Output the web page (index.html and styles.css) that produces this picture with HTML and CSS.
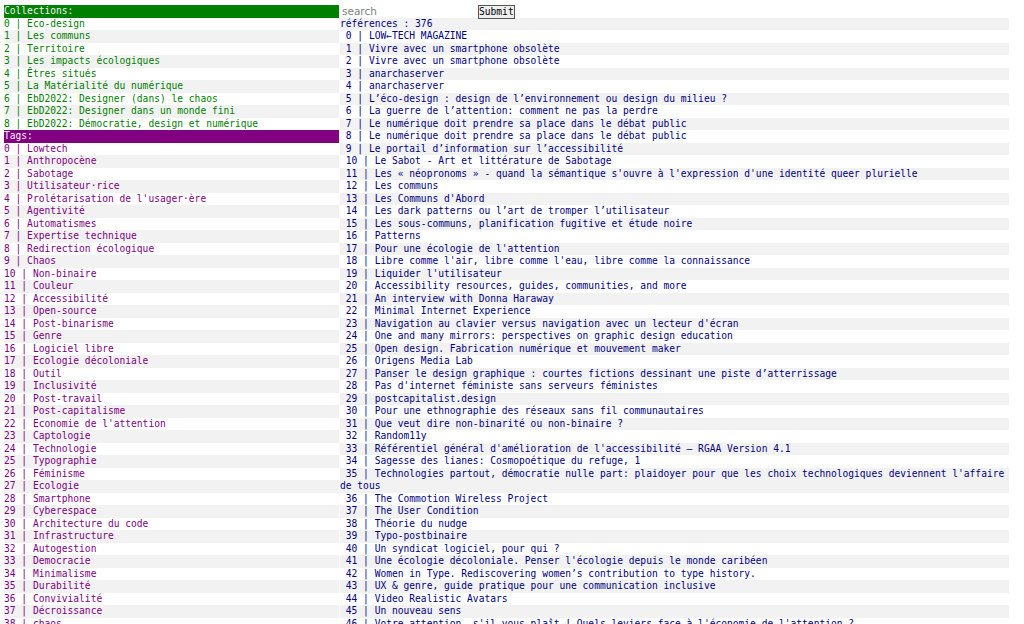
FILE: index.html
```html
<!DOCTYPE html>
<html lang="fr">
<head>
<meta charset="utf-8">
<title>Références</title>
<link rel="stylesheet" href="styles.css">
</head>
<body>
<div class="page">
  <div class="side">
    <section class="group collections">
      <div class="head">Collections:</div>
      <div class="row">0 | Eco-design</div>
      <div class="row">1 | Les communs</div>
      <div class="row">2 | Territoire</div>
      <div class="row">3 | Les impacts écologiques</div>
      <div class="row">4 | Êtres situés</div>
      <div class="row">5 | La Matérialité du numérique</div>
      <div class="row">6 | EbD2022: Designer (dans) le chaos</div>
      <div class="row">7 | EbD2022: Designer dans un monde fini</div>
      <div class="row">8 | EbD2022: Démocratie, design et numérique</div>
    </section>
    <section class="group tags">
      <div class="head">Tags:</div>
      <div class="row">0 | Lowtech</div>
      <div class="row">1 | Anthropocène</div>
      <div class="row">2 | Sabotage</div>
      <div class="row">3 | Utilisateur·rice</div>
      <div class="row">4 | Prolétarisation de l'usager·ère</div>
      <div class="row">5 | Agentivité</div>
      <div class="row">6 | Automatismes</div>
      <div class="row">7 | Expertise technique</div>
      <div class="row">8 | Redirection écologique</div>
      <div class="row">9 | Chaos</div>
      <div class="row">10 | Non-binaire</div>
      <div class="row">11 | Couleur</div>
      <div class="row">12 | Accessibilité</div>
      <div class="row">13 | Open-source</div>
      <div class="row">14 | Post-binarisme</div>
      <div class="row">15 | Genre</div>
      <div class="row">16 | Logiciel libre</div>
      <div class="row">17 | Ecologie décoloniale</div>
      <div class="row">18 | Outil</div>
      <div class="row">19 | Inclusivité</div>
      <div class="row">20 | Post-travail</div>
      <div class="row">21 | Post-capitalisme</div>
      <div class="row">22 | Economie de l'attention</div>
      <div class="row">23 | Captologie</div>
      <div class="row">24 | Technologie</div>
      <div class="row">25 | Typographie</div>
      <div class="row">26 | Féminisme</div>
      <div class="row">27 | Ecologie</div>
      <div class="row">28 | Smartphone</div>
      <div class="row">29 | Cyberespace</div>
      <div class="row">30 | Architecture du code</div>
      <div class="row">31 | Infrastructure</div>
      <div class="row">32 | Autogestion</div>
      <div class="row">33 | Democracie</div>
      <div class="row">34 | Minimalisme</div>
      <div class="row">35 | Durabilité</div>
      <div class="row">36 | Convivialité</div>
      <div class="row">37 | Décroissance</div>
      <div class="row">38 | chaos</div>
      <div class="row">39 | Design</div>
    </section>
  </div>
  <div class="main">
    <form class="search">
      <input class="search-input" type="text" placeholder="search">
      <button class="search-btn" type="button">Submit</button>
    </form>
    <div class="refs">
      <div class="ref">références : 376</div>
      <div class="ref"> 0 | LOW←TECH MAGAZINE</div>
      <div class="ref"> 1 | Vivre avec un smartphone obsolète</div>
      <div class="ref"> 2 | Vivre avec un smartphone obsolète</div>
      <div class="ref"> 3 | anarchaserver</div>
      <div class="ref"> 4 | anarchaserver</div>
      <div class="ref"> 5 | L’éco-design : design de l’environnement ou design du milieu ?</div>
      <div class="ref"> 6 | La guerre de l’attention: comment ne pas la perdre</div>
      <div class="ref"> 7 | Le numérique doit prendre sa place dans le débat public</div>
      <div class="ref"> 8 | Le numérique doit prendre sa place dans le débat public</div>
      <div class="ref"> 9 | Le portail d’information sur l’accessibilité</div>
      <div class="ref"> 10 | Le Sabot - Art et littérature de Sabotage</div>
      <div class="ref"> 11 | Les « néopronoms » - quand la sémantique s'ouvre à l'expression d'une identité queer plurielle</div>
      <div class="ref"> 12 | Les communs</div>
      <div class="ref"> 13 | Les Communs d'Abord</div>
      <div class="ref"> 14 | Les dark patterns ou l’art de tromper l’utilisateur</div>
      <div class="ref"> 15 | Les sous-communs, planification fugitive et étude noire</div>
      <div class="ref"> 16 | Patterns</div>
      <div class="ref"> 17 | Pour une écologie de l'attention</div>
      <div class="ref"> 18 | Libre comme l'air, libre comme l'eau, libre comme la connaissance</div>
      <div class="ref"> 19 | Liquider l'utilisateur</div>
      <div class="ref"> 20 | Accessibility resources, guides, communities, and more</div>
      <div class="ref"> 21 | An interview with Donna Haraway</div>
      <div class="ref"> 22 | Minimal Internet Experience</div>
      <div class="ref"> 23 | Navigation au clavier versus navigation avec un lecteur d'écran</div>
      <div class="ref"> 24 | One and many mirrors: perspectives on graphic design education</div>
      <div class="ref"> 25 | Open design. Fabrication numérique et mouvement maker</div>
      <div class="ref"> 26 | Origens Media Lab</div>
      <div class="ref"> 27 | Panser le design graphique : courtes fictions dessinant une piste d’atterrissage</div>
      <div class="ref"> 28 | Pas d'internet féministe sans serveurs féministes</div>
      <div class="ref"> 29 | postcapitalist.design</div>
      <div class="ref"> 30 | Pour une ethnographie des réseaux sans fil communautaires</div>
      <div class="ref"> 31 | Que veut dire non-binarité ou non-binaire ?</div>
      <div class="ref"> 32 | Random11y</div>
      <div class="ref"> 33 | Référentiel général d'amélioration de l'accessibilité – RGAA Version 4.1</div>
      <div class="ref"> 34 | Sagesse des lianes: Cosmopoétique du refuge, 1</div>
      <div class="ref"> 35 | Technologies partout, démocratie nulle part: plaidoyer pour que les choix technologiques deviennent l'affaire de tous</div>
      <div class="ref"> 36 | The Commotion Wireless Project</div>
      <div class="ref"> 37 | The User Condition</div>
      <div class="ref"> 38 | Théorie du nudge</div>
      <div class="ref"> 39 | Typo-postbinaire</div>
      <div class="ref"> 40 | Un syndicat logiciel, pour qui ?</div>
      <div class="ref"> 41 | Une écologie décoloniale. Penser l'écologie depuis le monde caribéen</div>
      <div class="ref"> 42 | Women in Type. Rediscovering women’s contribution to type history.</div>
      <div class="ref"> 43 | UX &amp; genre, guide pratique pour une communication inclusive</div>
      <div class="ref"> 44 | Video Realistic Avatars</div>
      <div class="ref"> 45 | Un nouveau sens</div>
      <div class="ref"> 46 | Votre attention, s'il vous plaît ! Quels leviers face à l'économie de l'attention ?</div>
      <div class="ref"> 47 | Web Sustainability Guidelines</div>
    </div>
  </div>
</div>
</body>
</html>
```

FILE: styles.css
```css
html, body {
  margin: 0;
  padding: 0;
  background: #fff;
}

body {
  padding: 5px 15px 0 4px;
  font-family: "DejaVu Sans Mono", monospace;
  font-size: 9.6px;
  line-height: 12.5px;
}

.page {
  display: grid;
  grid-template-columns: 1fr 2fr;
}

.side {
  min-width: 0;
}

.group .row:nth-child(odd) {
  background: #f2f2f2;
}

.head {
  color: #f4f4f4;
}

.collections .head {
  background: #008000;
}

.collections .row {
  color: #008000;
}

.tags .head {
  background: #800080;
}

.tags .row {
  color: #800080;
}

.main {
  min-width: 0;
  padding-left: 1px;
}

.search {
  display: flex;
  align-items: center;
  height: 12.5px;
  margin: 0;
}

.search-input {
  width: 135px;
  height: 12.5px;
  border: 0;
  padding: 0 0 0 2px;
  margin: 0;
  background: transparent;
  font-family: "DejaVu Sans", sans-serif;
  font-size: 10.5px;
  color: #333;
  outline: none;
}

.search-input::placeholder {
  color: #808080;
}

.search-btn {
  margin: 2px 0 0 1px;
  height: 14px;
  padding: 0;
  border: 1px solid #555;
  border-radius: 0;
  background: #efefef;
  color: #000;
  font-family: "DejaVu Sans Mono", monospace;
  font-size: 9.6px;
  line-height: 12px;
}

.refs .ref {
  color: #000080;
  white-space: pre-wrap;
}

.refs .ref:nth-child(odd) {
  background: #f2f2f2;
}
```
